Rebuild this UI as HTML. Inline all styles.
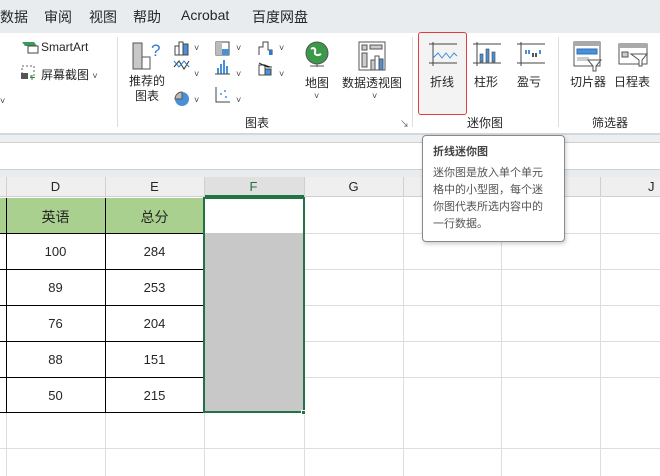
<!DOCTYPE html><html><head><meta charset="utf-8"><style>
*{margin:0;padding:0;box-sizing:border-box}
body{width:660px;height:476px;overflow:hidden;position:relative;background:#fff;font-family:"Liberation Sans","Noto Sans CJK SC",sans-serif;color:#262626}
.a{position:absolute;white-space:nowrap}
.t{font-size:14px}
.s{font-size:12px}
.v{font-size:9px;color:#444}
.vl{position:absolute;width:1px;background:#dedede}
.hl{position:absolute;height:1px;background:#dedede}
.bk{position:absolute;background:#000}
.c{position:absolute;font-size:13px;text-align:center;width:99px}
</style></head><body>
<div class="a" style="left:0;top:0;width:660px;height:33px;background:#e8ecef"></div>
<div class="a t" style="left:0;top:7px">数据</div>
<div class="a t" style="left:44px;top:7px">审阅</div>
<div class="a t" style="left:89px;top:7px">视图</div>
<div class="a t" style="left:133px;top:7px">帮助</div>
<div class="a t" style="left:181px;top:7px">Acrobat</div>
<div class="a t" style="left:252px;top:7px">百度网盘</div>
<div class="a" style="left:0;top:133px;width:660px;height:2px;background:#d4d8db"></div>
<div class="vl" style="left:117px;top:37px;height:90px"></div>
<div class="vl" style="left:412px;top:37px;height:90px"></div>
<div class="vl" style="left:558px;top:37px;height:90px"></div>
<svg class="a" style="left:20px;top:40px" width="20" height="14"><path d="M2 2h12l3 4H5z" fill="#3a9a5a"/><rect x="8" y="6" width="10" height="7" fill="none" stroke="#444"/></svg>
<div class="a s" style="left:41px;top:40px">SmartArt</div>
<svg class="a" style="left:20px;top:64px" width="16" height="16"><rect x="2" y="2" width="12" height="10" fill="none" stroke="#666" stroke-dasharray="2 2"/><rect x="1" y="9" width="7" height="6" fill="#555"/><path d="M12 11v5M10 13.5h5" stroke="#2a8a3a"/></svg>
<div class="a s" style="left:41px;top:66px">屏幕截图 <span class="v">˅</span></div>
<div class="a v" style="left:0;top:96px">˅</div>
<svg class="a" style="left:131px;top:39px" width="32" height="32"><rect x="2" y="4" width="9" height="26" fill="#c8c8c8" stroke="#555"/><rect x="11" y="18" width="8" height="12" fill="#fff" stroke="#555"/><text x="20" y="17" font-size="17" fill="#2d7bd1" font-family="Liberation Sans">?</text></svg>
<div class="a s" style="left:129px;top:74px;line-height:15px;text-align:center">推荐的<br>图表</div>
<svg class="a" style="left:173px;top:39px" width="30" height="70"><rect x="2" y="7" width="4" height="9" fill="#fff" stroke="#444"/><rect x="6" y="3" width="4" height="13" fill="#fff" stroke="#444"/><rect x="10" y="5" width="5" height="11" fill="#4a90d9" stroke="#444"/><path d="M1 28l5 -6 5 8 5-8" fill="none" stroke="#333"/><path d="M1 22l5 6 5-6 5 6" fill="none" stroke="#2d7bd1"/><circle cx="9" cy="60" r="7" fill="#4a90d9"/><path d="M9 60V53A7 7 0 0 0 2 60z" fill="#bbb" stroke="#555"/></svg>
<div class="a v" style="left:194px;top:43px">˅</div><div class="a v" style="left:194px;top:69px">˅</div><div class="a v" style="left:194px;top:95px">˅</div>
<svg class="a" style="left:214px;top:39px" width="30" height="70"><rect x="2" y="3" width="13" height="13" fill="#fff" stroke="#444"/><rect x="2" y="3" width="6" height="13" fill="#bbb"/><rect x="8" y="10" width="7" height="6" fill="#4a90d9"/><rect x="3" y="29" width="2" height="6" fill="#4a90d9"/><rect x="6" y="25" width="2" height="10" fill="#4a90d9"/><rect x="9" y="21" width="2" height="14" fill="#4a90d9"/><rect x="12" y="27" width="2" height="8" fill="#4a90d9"/><path d="M1 35h15M2 48v15h14" stroke="#444" fill="none"/><circle cx="7" cy="55" r="1" fill="#4a90d9"/><circle cx="11" cy="52" r="1" fill="#4a90d9"/><circle cx="12" cy="58" r="1" fill="#4a90d9"/></svg>
<div class="a v" style="left:236px;top:43px">˅</div><div class="a v" style="left:236px;top:69px">˅</div><div class="a v" style="left:236px;top:95px">˅</div>
<svg class="a" style="left:257px;top:39px" width="30" height="45"><path d="M2 16V8h4V3h5v8h4v5" fill="none" stroke="#444"/><rect x="12" y="11" width="3" height="5" fill="#2d7bd1"/><rect x="2" y="26" width="6" height="10" fill="#fff" stroke="#444"/><rect x="8" y="30" width="6" height="6" fill="#4a90d9" stroke="#444"/><path d="M2 24l8 4 5 0" stroke="#333"/></svg>
<div class="a v" style="left:279px;top:43px">˅</div><div class="a v" style="left:279px;top:69px">˅</div>
<svg class="a" style="left:304px;top:40px" width="26" height="30"><circle cx="13" cy="13" r="11" fill="#3a9a4a" stroke="#555"/><path d="M7 9c3-2 5 0 4 3s3 4 6 2" stroke="#fff" stroke-width="2" fill="none"/><path d="M6 26h14M13 24v3" stroke="#555"/></svg>
<div class="a s" style="left:305px;top:74px">地图</div><div class="a v" style="left:314px;top:91px">˅</div>
<svg class="a" style="left:357px;top:40px" width="32" height="32"><rect x="2" y="2" width="26" height="28" fill="#fff" stroke="#555"/><rect x="5" y="5" width="5" height="5" fill="#ccc" stroke="#555"/><rect x="13" y="5" width="12" height="4" fill="#ccc" stroke="#555"/><rect x="5" y="13" width="5" height="14" fill="#ccc" stroke="#555"/><rect x="14" y="20" width="4" height="10" fill="#ccc" stroke="#555"/><rect x="18" y="16" width="4" height="14" fill="#fff" stroke="#555"/><rect x="22" y="19" width="4" height="11" fill="#4a90d9" stroke="#555"/></svg>
<div class="a s" style="left:342px;top:74px">数据透视图</div><div class="a v" style="left:372px;top:91px">˅</div>
<div class="a s" style="left:245px;top:114px">图表</div>
<div class="a" style="left:400px;top:117px;font-size:9px;color:#555">↘</div>
<div class="a" style="left:418px;top:32px;width:49px;height:83px;background:#f3f3f3;border:1.5px solid #e03c3c;border-radius:3px"></div>
<svg class="a" style="left:428px;top:42px" width="30" height="24"><path d="M1 2h28M1 21h28M5 0v24" stroke="#444"/><path d="M5 16l5-5 4 5 4-5 4 5 4-5 3 3" stroke="#3a8fd8" fill="none"/></svg>
<div class="a s" style="left:430px;top:73px">折线</div>
<svg class="a" style="left:472px;top:42px" width="30" height="24"><path d="M1 2h28M1 21h28M5 0v24" stroke="#444"/><rect x="8" y="12" width="3" height="8" fill="#4a90d9" stroke="#444" stroke-width=".6"/><rect x="14" y="7" width="3" height="13" fill="#4a90d9" stroke="#444" stroke-width=".6"/><rect x="20" y="10" width="3" height="10" fill="#4a90d9" stroke="#444" stroke-width=".6"/></svg>
<div class="a s" style="left:474px;top:73px">柱形</div>
<svg class="a" style="left:516px;top:42px" width="30" height="24"><path d="M1 2h28M1 21h28M5 0v24" stroke="#444"/><rect x="9" y="8" width="2" height="4" fill="#4a90d9"/><rect x="12" y="8" width="2" height="4" fill="#4a90d9"/><rect x="16" y="11" width="2" height="4" fill="#555"/><rect x="19" y="11" width="2" height="4" fill="#555"/><rect x="23" y="8" width="2" height="4" fill="#4a90d9"/></svg>
<div class="a s" style="left:517px;top:73px">盈亏</div>
<div class="a s" style="left:467px;top:114px">迷你图</div>
<svg class="a" style="left:572px;top:40px" width="32" height="32"><rect x="2" y="2" width="26" height="24" fill="#fff" stroke="#555"/><rect x="2" y="2" width="26" height="4" fill="#aaa"/><rect x="5" y="9" width="20" height="5" fill="#4a90d9" stroke="#2d6fb5"/><rect x="5" y="17" width="12" height="4" fill="#ccc"/><path d="M16 20h13l-5 6v5h-3v-5z" fill="#fff" stroke="#555"/></svg>
<div class="a s" style="left:570px;top:73px">切片器</div>
<svg class="a" style="left:617px;top:42px" width="34" height="32"><rect x="2" y="2" width="28" height="20" fill="#fff" stroke="#555"/><rect x="2" y="2" width="28" height="4" fill="#aaa"/><rect x="5" y="10" width="6" height="5" fill="#ccc" stroke="#555"/><path d="M14 12h16l-5 6v6h-3v-6z" fill="#fff" stroke="#555"/></svg>
<div class="a s" style="left:614px;top:73px">日程表</div>
<div class="a s" style="left:592px;top:114px">筛选器</div>
<div class="a" style="left:0;top:135px;width:660px;height:7px;background:#eceff1"></div>
<div class="a" style="left:0;top:142px;width:660px;height:1px;background:#d0d0d0"></div>
<div class="a" style="left:0;top:169px;width:660px;height:8px;background:#e8ecef;border-top:1px solid #d0d0d0"></div>
<div class="a" style="left:0;top:177px;width:660px;height:20px;background:#efefef;border-bottom:1px solid #d0d0d0"></div>
<div class="a" style="left:204px;top:177px;width:100px;height:20px;background:#e0e0e0;border-bottom:2px solid #217346"></div>
<div class="vl" style="left:6px;top:177px;height:20px;background:#d0d0d0"></div>
<div class="vl" style="left:105px;top:177px;height:20px;background:#d0d0d0"></div>
<div class="vl" style="left:204px;top:177px;height:20px;background:#d0d0d0"></div>
<div class="vl" style="left:304px;top:177px;height:20px;background:#d0d0d0"></div>
<div class="vl" style="left:403px;top:177px;height:20px;background:#d0d0d0"></div>
<div class="vl" style="left:501px;top:177px;height:20px;background:#d0d0d0"></div>
<div class="vl" style="left:600px;top:177px;height:20px;background:#d0d0d0"></div>
<div class="c" style="left:6px;top:179px">D</div><div class="c" style="left:105px;top:179px">E</div><div class="c" style="left:204px;top:179px;color:#217346">F</div><div class="c" style="left:304px;top:179px">G</div><div class="c" style="left:648px;top:179px;text-align:left">J</div>
<div class="vl" style="left:304px;top:198px;height:278px"></div>
<div class="vl" style="left:403px;top:198px;height:278px"></div>
<div class="vl" style="left:501px;top:198px;height:278px"></div>
<div class="vl" style="left:600px;top:198px;height:278px"></div>
<div class="vl" style="left:6px;top:412px;height:64px"></div>
<div class="vl" style="left:105px;top:412px;height:64px"></div>
<div class="vl" style="left:204px;top:412px;height:64px"></div>
<div class="hl" style="left:0;top:233px;width:660px"></div>
<div class="hl" style="left:0;top:269px;width:660px"></div>
<div class="hl" style="left:0;top:305px;width:660px"></div>
<div class="hl" style="left:0;top:341px;width:660px"></div>
<div class="hl" style="left:0;top:377px;width:660px"></div>
<div class="hl" style="left:0;top:448px;width:660px"></div>
<div class="a" style="left:0;top:198px;width:204px;height:35px;background:#a9d08e"></div>
<div class="a" style="left:204px;top:233px;width:100px;height:179px;background:#c8c8c8"></div>
<div class="bk" style="left:6px;top:198px;width:1px;height:214px"></div>
<div class="bk" style="left:105px;top:198px;width:1px;height:214px"></div>
<div class="bk" style="left:0;top:233px;width:204px;height:1px"></div>
<div class="bk" style="left:0;top:269px;width:204px;height:1px"></div>
<div class="bk" style="left:0;top:305px;width:204px;height:1px"></div>
<div class="bk" style="left:0;top:341px;width:204px;height:1px"></div>
<div class="bk" style="left:0;top:377px;width:204px;height:1px"></div>
<div class="bk" style="left:0;top:412px;width:204px;height:1px"></div>
<div class="a" style="left:203px;top:197px;width:102px;height:216px;border:2px solid #217346"></div>
<div class="a" style="left:301px;top:410px;width:5px;height:5px;background:#217346;border:1px solid #fff"></div>
<div class="c" style="left:6px;top:207px;font-size:14px">英语</div><div class="c" style="left:105px;top:207px;font-size:14px">总分</div>
<div class="c" style="left:6px;top:244px">100</div><div class="c" style="left:105px;top:244px">284</div>
<div class="c" style="left:6px;top:280px">89</div><div class="c" style="left:105px;top:280px">253</div>
<div class="c" style="left:6px;top:316px">76</div><div class="c" style="left:105px;top:316px">204</div>
<div class="c" style="left:6px;top:352px">88</div><div class="c" style="left:105px;top:352px">151</div>
<div class="c" style="left:6px;top:388px">50</div><div class="c" style="left:105px;top:388px">215</div>
<div class="a" style="left:422px;top:135px;width:143px;height:107px;background:#fff;border:1px solid #8a8a8a;border-radius:4px;box-shadow:1px 2px 4px rgba(0,0,0,.2)"></div>
<div class="a" style="left:433px;top:143px;font-size:11px;font-weight:bold;color:#444">折线迷你图</div>
<div class="a" style="left:433px;top:165px;font-size:11px;line-height:17px;color:#555">迷你图是放入单个单元<br>格中的小型图，每个迷<br>你图代表所选内容中的<br>一行数据。</div>
</body></html>
